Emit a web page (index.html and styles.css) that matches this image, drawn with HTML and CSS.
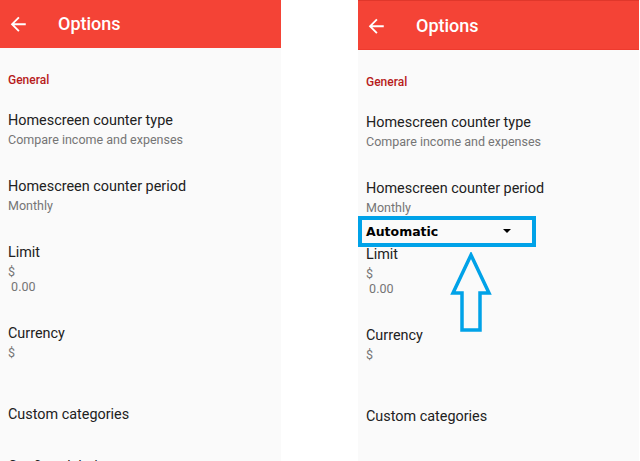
FILE: index.html
```html
<!DOCTYPE html>
<html>
<head>
<meta charset="utf-8">
<link rel="stylesheet" href="styles.css">
</head>
<body>
<div class="stage">
  <section class="panel">
    <header class="appbar">
      <svg class="back" viewBox="0 0 24 24"><path d="M20 11H7.83l5.59-5.59L12 4l-8 8 8 8 1.41-1.41L7.83 13H20v-2z" fill="#fff"/></svg>
      <span class="title">Options</span>
    </header>
    <div class="list">
      <div class="section">General</div>
      <div class="item"><div class="t">Homescreen counter type</div><div class="s">Compare income and expenses</div></div>
      <div class="item"><div class="t">Homescreen counter period</div><div class="s">Monthly</div></div>
      <div class="item"><div class="t">Limit</div><div class="s">$</div><div class="s">&nbsp;0.00</div></div>
      <div class="item"><div class="t">Currency</div><div class="s">$</div><div class="s">&nbsp;</div></div>
      <div class="item"><div class="t">Custom categories</div></div>
      <div class="item item-last"><div class="t">Confirm deletion</div></div>
    </div>
  </section>
  <section class="panel panel-b">
    <header class="appbar appbar-b">
      <svg class="back" viewBox="0 0 24 24"><path d="M20 11H7.83l5.59-5.59L12 4l-8 8 8 8 1.41-1.41L7.83 13H20v-2z" fill="#fff"/></svg>
      <span class="title">Options</span>
    </header>
    <div class="list">
      <div class="section">General</div>
      <div class="item"><div class="t">Homescreen counter type</div><div class="s">Compare income and expenses</div></div>
      <div class="item"><div class="t">Homescreen counter period</div><div class="s">Monthly</div></div>
      <div class="item"><div class="t">Limit</div><div class="s">$</div><div class="s">&nbsp;0.00</div></div>
      <div class="item"><div class="t">Currency</div><div class="s">$</div><div class="s">&nbsp;</div></div>
      <div class="item"><div class="t">Custom categories</div></div>
      <div class="item item-last"><div class="t">Confirm deletion</div></div>
    </div>
    <div class="dropdown"><span class="dd-text">Automatic</span><span class="caret"></span></div>
    <svg class="uparrow" viewBox="0 0 42 82"><path d="M21 3 L39 41 L30 41 L30 78 L12 78 L12 41 L3 41 Z" fill="none" stroke="#00a2e8" stroke-width="3.5" stroke-linejoin="miter"/></svg>
  </section>
</div>
</body>
</html>
```
FILE: styles.css
```css
* { box-sizing: border-box; }
html, body { margin: 0; padding: 0; background: #ffffff; }
body { width: 640px; height: 461px; overflow: hidden; font-family: Roboto, "Noto Sans", sans-serif; }
.stage { display: flex; gap: 77px; height: 461px; }
.panel { position: relative; width: 281px; height: 461px; background: #fafafa; overflow: hidden; }
.appbar { height: 48px; background: #f44336; display: flex; align-items: center; position: relative; }
.appbar-b { height: 50px; border-top: 1px solid #e0372b; border-bottom: 1px solid #ee3a2e; }
.back { position: absolute; left: 7px; top: 13px; width: 22.5px; height: 22.5px; }
.appbar-b .back { top: 14px; }
.title { margin-left: 58px; color: #fff; font-size: 18px; font-weight: 500; line-height: 22px; }
.appbar-b .title { margin-top: 1px; }
.list { padding: 0 8px; }
.section { color: #b71c1c; font-size: 12px; font-weight: 500; line-height: 16px; padding-top: 24px; margin-bottom: 6.5px; }
.item { padding: 15px 0 14px; }
.item-last { padding-top: 16px; }
.t { color: #212121; font-size: 14.4px; line-height: 21px; margin-bottom: 1px; }
.s { color: #757575; font-size: 12.5px; line-height: 15px; }
.dropdown { position: absolute; left: 0; top: 216px; width: 178px; height: 31px; border: 4px solid #00a2e8; background: #fafafa; display: flex; align-items: center; padding-left: 4px; }
.dd-text { font-family: "DejaVu Sans", Verdana, sans-serif; font-weight: bold; font-size: 12.5px; color: #000; }
.caret { position: absolute; left: 141px; top: 9px; width: 0; height: 0; border-left: 4px solid transparent; border-right: 4px solid transparent; border-top: 4px solid #000; }
.uparrow { position: absolute; left: 92px; top: 252px; width: 42px; height: 82px; }
```
